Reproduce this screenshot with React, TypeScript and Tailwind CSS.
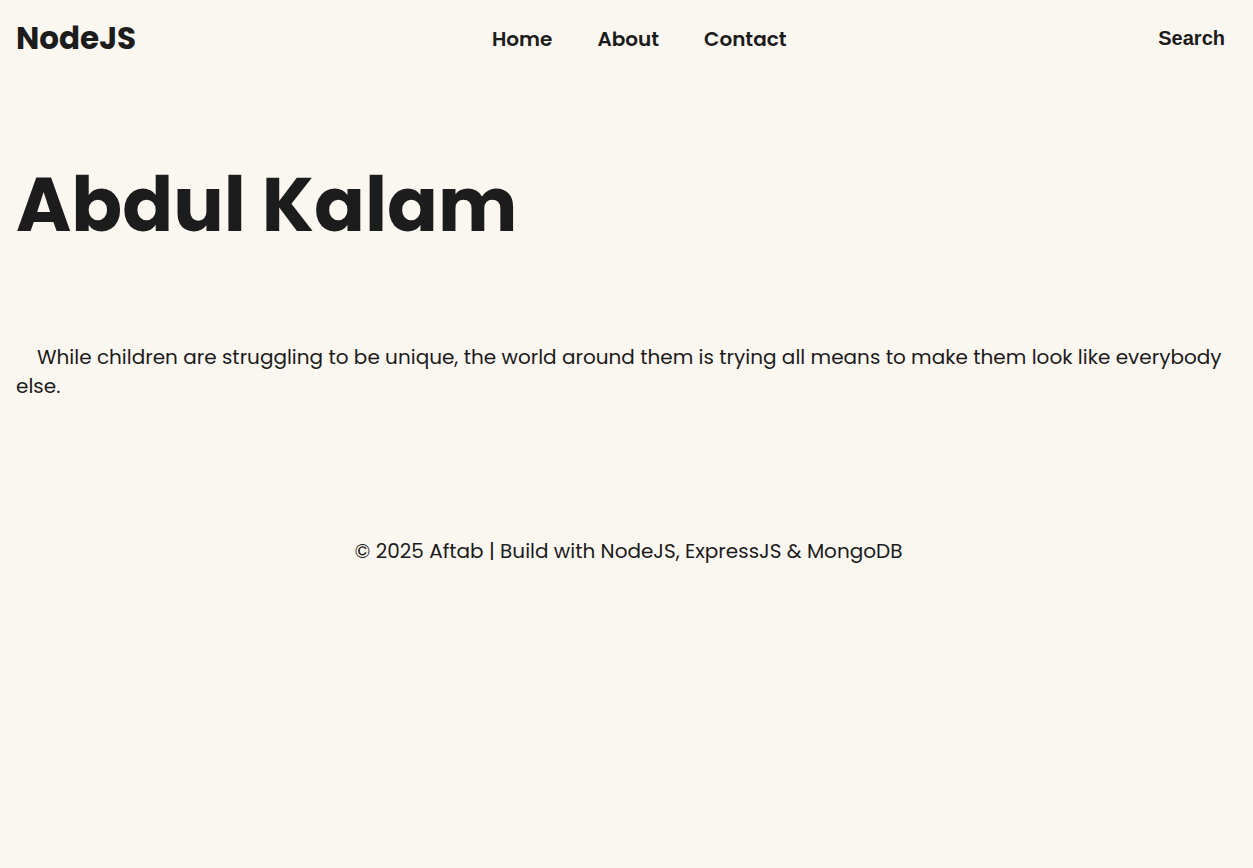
export default function App() {
  const font = { fontFamily: "Poppins, Inter, 'Open Sans', sans-serif" }
  return (
    <div className="min-h-[868px] bg-[#faf6f0] text-[#1c1c1c]" style={font}>
      <header className="flex items-center h-[76px] px-4">
        <a className="w-[476px] text-[31px] font-bold">NodeJS</a>
        <nav className="flex gap-[45px] pt-[2px] text-[20px] font-semibold">
          <a>Home</a>
          <a>About</a>
          <a>Contact</a>
        </nav>
        <button className="ml-auto mr-[12px] text-[20px] font-bold font-['Liberation_Sans',Arial,sans-serif]">
          Search
        </button>
      </header>

      <main className="px-4">
        <h1 className="mt-[84px] text-[75px] font-bold leading-[1.2]">Abdul Kalam</h1>
        <p className="mt-[93px] text-[20px] leading-[29px] indent-[21px]">
          While children are struggling to be unique, the world around them is trying all means to make them look like
          everybody else.
        </p>
      </main>

      <footer className="mt-[135px] pl-[4px] text-center text-[20px]">
        © 2025 Aftab | Build with NodeJS, ExpressJS &amp; MongoDB
      </footer>
    </div>
  )
}
